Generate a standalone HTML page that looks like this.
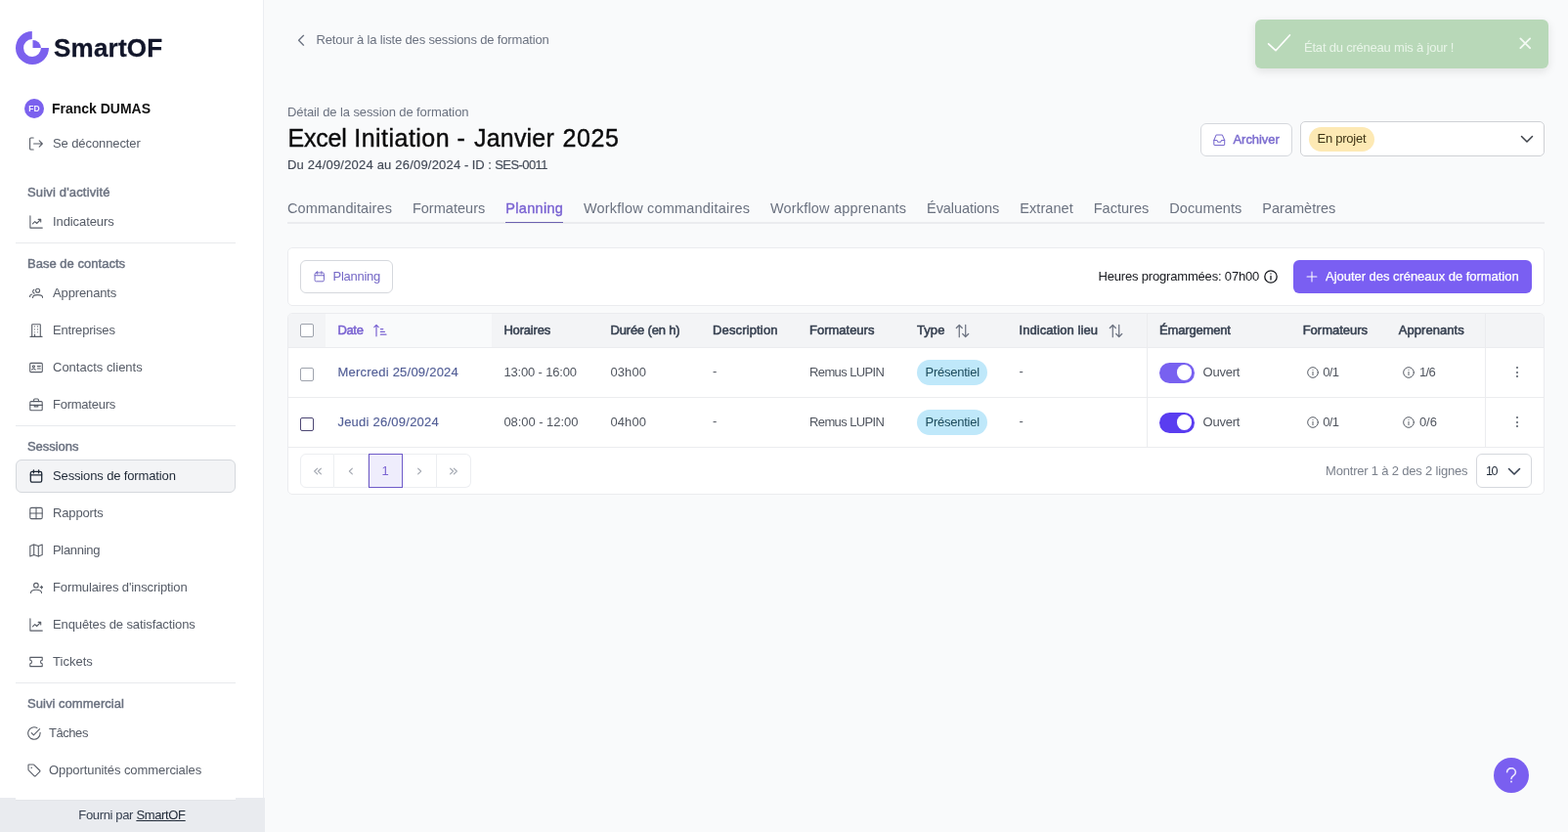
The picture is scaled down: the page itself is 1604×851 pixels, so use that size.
<!DOCTYPE html>
<html lang="fr">
<head>
<meta charset="utf-8">
<title>SmartOF - Excel Initiation - Janvier 2025</title>
<style>
*{box-sizing:border-box;margin:0;padding:0}
html,body{width:1604px;height:851px;overflow:hidden}
body{font-family:"Liberation Sans",sans-serif;font-size:13px;color:#50555f;background:#f9fafb;position:relative;will-change:transform}
a{color:inherit;text-decoration:none}
svg{display:block;flex:none}
span{white-space:nowrap}
/* ---------- sidebar ---------- */
.sidebar{position:absolute;left:0;top:0;width:270px;height:851px;background:#fff;border-right:1px solid #eceef2}
.logo{position:absolute;left:16px;top:32px;height:34px;display:flex;align-items:center}
.logo .logo-text{top:0;font-weight:700;font-size:26px;color:#12162a;-webkit-text-stroke:.3px #12162a;margin-left:5px;line-height:34px}
.user{position:absolute;left:25px;top:101px;height:20px;display:flex;align-items:center}
.avatar{width:20px;height:20px;border-radius:50%;background:#7b61ee;color:#f3f0ff;font-size:8.5px;font-weight:700;display:flex;align-items:center;justify-content:center}
.user .user-name{top:0;margin-left:8px;font-size:14px;font-weight:700;color:#111}
.nav{position:absolute;left:16px;top:130px;width:225px;background:#fff;z-index:1}
.nav a{display:flex;align-items:center;height:34px;margin-bottom:4px;padding-left:13px;border:1px solid transparent;border-radius:6px;color:#555b66}
.nav a svg{margin-right:10px;color:#595e68}
.t{position:relative;top:-1px}
.nav a.tight svg{margin-right:8px;margin-left:-2px}
.nav a.active{background:#f3f4f6;border-color:#d5d8dd;color:#1f2937}
.nav a.active svg{color:#1f2937;stroke-width:1.3}
.nav h3{font-size:13px;font-weight:400;color:#6b7280;-webkit-text-stroke:.45px #6b7280;height:26px;line-height:26px;padding-left:12px;margin-top:8px}
.nav hr{border:0;border-top:1px solid #e8eaed;height:1px;margin:0}
.footer{position:absolute;left:0;top:816px;width:271px;padding-right:1px;height:35px;background:#e9ebef;text-align:center;line-height:35px;color:#374151}
.footer a{text-decoration:underline;color:#1f2937}
/* ---------- main ---------- */
.main{position:absolute;left:270px;top:0;width:1334px;height:851px}
.back{position:absolute;left:32px;top:31px;height:20px;display:flex;align-items:center;color:#6b7280}
.back svg{margin-right:9px}
.kicker{position:absolute;left:24px;top:106px;height:20px;line-height:20px;color:#6b7280}
h1{position:absolute;left:24px;top:126px;height:30px;line-height:30px;font-size:25px;font-weight:400;color:#0b0b0c;-webkit-text-stroke:.4px #0b0b0c}
.sub{position:absolute;left:24px;top:160px;height:20px;line-height:20px;color:#434a57;-webkit-text-stroke:.15px #434a57;white-space:nowrap}
.btn{display:flex;align-items:center;height:34px;border:1px solid #d5d8dd;border-radius:6px;background:#fff;color:#7467c6}
.archive{position:absolute;left:958px;top:126px;width:94px;padding-left:12px;-webkit-text-stroke:.45px #7b6ccf;color:#7b6ccf}
.archive svg{margin-right:8px}
.status{position:absolute;left:1060px;top:124px;width:250px;height:36px;border:1px solid #cfd1d5;border-radius:5px;background:#fff;display:flex;align-items:center;padding-left:8px}
.badge-y{height:25px;border-radius:13px;background:#fde9b4;color:#3f3415;padding:0 8.5px;display:flex;align-items:center}
.status svg{position:absolute;right:10.3px;top:9.5px;color:#3c4048}
.tabs{position:absolute;left:24px;top:198px;width:1286px;height:31px;border-bottom:2px solid #ebecef;display:flex;font-size:14.5px;color:#6b7280}
.tabs a{white-space:nowrap;height:30px;line-height:31px;margin-right:21px;border-bottom:1px solid transparent;position:relative;z-index:1}
.tabs a.on{color:#7a63d2;-webkit-text-stroke:.4px #7a63d2;border-bottom-color:#6d62b0}
.toast{position:absolute;left:1014px;top:20px;width:300px;height:50px;border-radius:6px;background:#b8d8b8;color:#e9f5e9;box-shadow:0 3px 10px rgba(0,0,0,.10)}
.toast .ck{position:absolute;left:12px;top:14px}
.toast .msg{position:absolute;left:50px;top:19px;height:20px;line-height:20px}
.toast .x{position:absolute;left:270px;top:17.7px}
/* toolbar */
.bar{position:absolute;left:24px;top:253px;width:1286px;height:60px;background:#fff;border:1px solid #ebecef;border-radius:5px}
.bar .plan{position:absolute;left:12px;top:12px;width:95px;padding-left:12.5px}
.bar .plan svg{margin-right:8.5px}
.hours{position:absolute;left:828.5px;top:19px;height:20px;display:flex;align-items:center;color:#15171c}
.hours svg{margin-left:5px}
.add{position:absolute;left:1028px;top:12px;width:244px;height:34px;border-radius:6px;background:#7a5ff2;color:#fff;display:flex;align-items:center;padding-left:13px;-webkit-text-stroke:.25px #fff}
.add svg{margin-right:8px}
/* table */
.tbl{position:absolute;left:24px;top:320px;width:1286px;height:186px;background:#fff;border:1px solid #ebecef;border-radius:5px;overflow:hidden}
.tr{position:absolute;left:0;width:1284px;display:flex;border-bottom:1px solid #ebecef}
.tr.h{top:0;height:35px;background:#f3f4f6;color:#374151;font-size:13px;-webkit-text-stroke:.55px #374151}
.tr.r1{top:35px;height:51px}
.tr.r2{top:86px;height:51px}
.td{display:flex;align-items:center;height:100%;flex:none}
.c0{width:38px;padding-left:12px}
.c1{width:170px;padding-left:12.4px}
.c2{width:110px;padding-left:12.4px}
.c3{width:104px;padding-left:11.5px}
.c4{width:99px;padding-left:12px}
.c5{width:110px;padding-left:12px}
.c6{width:104px;padding-left:12px}
.c7{width:143px;padding-left:12.5px}
.c8{width:147px;padding-left:12px;border-left:1px solid #ebecef}
.c9{width:99px;padding-left:12.7px}
.c10{width:100px;padding-left:11.7px}
.c10.cnt svg{margin-right:5.2px}
.c11{width:60px;border-left:1px solid #ebecef;justify-content:center;padding-left:4px}
.tr.h .c1{background:#f9fafb;color:#7a63d2;-webkit-text-stroke-color:#7a63d2}
.tr.h svg{margin-left:10.5px;color:#6b7280}
.tr.h .c1 svg{color:#7a63d2}
.cb{width:14px;height:14px;border:1px solid #9ea3ad;border-radius:2px;background:#fff}
.r1 .cb,.r2 .cb{position:relative;top:2px}
.cb.hv{border-color:#4c4673}
.dash{position:relative;top:-2px}
.date{color:#525e96;-webkit-text-stroke:.15px #525e96}
.badge-b{height:26px;border-radius:13px;background:#bfe8fa;color:#1c4b5c;padding:0 8.5px;display:flex;align-items:center}
.sw{width:36px;height:21px;border-radius:11px;background:#7861f0;position:relative;margin-right:8.5px}
.sw i{position:absolute;right:2.8px;top:2.8px;width:15.4px;height:15.4px;border-radius:50%;background:#fff}
.sw.hv{background:#5a3df0}
.cnt svg{margin-right:4.5px;margin-left:4px}
.kebab{width:3px;height:13px;position:relative}
.kebab i{position:absolute;left:.5px;width:2px;height:2px;border-radius:50%;background:#555b66}
.pager{position:absolute;left:12px;top:143px;height:35px;display:flex}
.pager a{width:35px;height:35px;display:flex;align-items:center;justify-content:center;color:#a3a8b1;border:1px solid #eceef1;border-left-width:0;font-size:13px}
.pager a:first-child{border-left-width:1px;border-radius:6px 0 0 6px}
.pager a:last-child{border-radius:0 6px 6px 0}
.pager a.on{background:#efedfc;color:#7a63d2;outline:1px solid #6f5bc9;outline-offset:-1px}
.showing .t,.per .t{top:0}
.showing{position:absolute;left:1061px;top:151px;height:20px;line-height:20px;color:#7b818c}
.per{position:absolute;left:1215px;top:143px;width:57px;height:35px;border:1px solid #d5d8dd;border-radius:6px;display:flex;align-items:center;padding-left:9px;color:#1f2937;font-size:12.5px}
.per svg{position:absolute;right:10px;top:10px;color:#374151}
.help{position:absolute;left:1258px;top:775px;width:36px;height:36px;border-radius:50%;background:#7a5ff0;color:#ece8fd;display:flex;align-items:center;justify-content:center;padding-bottom:1px}
</style>
</head>
<body>
<aside class="sidebar">
  <div class="logo">
    <svg width="34" height="34" viewBox="0 0 34 34"><path d="M16.8 0A17 17 0 1 0 34 16.9H25.9A8.9 8.9 0 1 1 16.8 8.1Z" fill="#7b61ee"/><path d="M17.5 8.9A8.3 8.3 0 0 1 25.9 17.1H17.5Z" fill="#7b61ee"/></svg>
    <span class="t logo-text" style="letter-spacing:0.233px">SmartOF</span>
  </div>
  <div class="user"><span class="avatar">FD</span><span class="t user-name" style="letter-spacing:-0.012px">Franck DUMAS</span></div>
  <nav class="nav">
    <a href="#"><svg width="14" height="14" viewBox="0 0 14 14" fill="none" stroke="currentColor" stroke-width="1.1" stroke-linecap="round" stroke-linejoin="round"><path d="M4.2 1H1.6a1 1 0 0 0-1 1v10a1 1 0 0 0 1 1h2.6"/><path d="M4.6 7h8.4M10.2 3.9l3.1 3.1-3.1 3.1"/></svg><span class="t" style="letter-spacing:-0.097px">Se déconnecter</span></a>
    <h3 style="margin-top:20px;letter-spacing:0.163px">Suivi d'activité</h3>
    <a href="#"><svg width="14" height="14" viewBox="0 0 14 14" fill="none" stroke="currentColor" stroke-width="1.1" stroke-linecap="round" stroke-linejoin="round"><path d="M0.9 0.8v12.3h12.4"/><path d="M3.4 8.9l2.3-2.3 1.9 1.9 3.9-3.9"/><path d="M9.2 4.4h2.5v2.5"/></svg><span class="t" style="letter-spacing:-0.089px">Indicateurs</span></a>
    <hr>
    <h3 style="letter-spacing:0.025px">Base de contacts</h3>
    <a href="#"><svg width="14" height="14" viewBox="0 0 14 14" fill="none" stroke="currentColor" stroke-width="1.1" stroke-linecap="round" stroke-linejoin="round"><circle cx="8.6" cy="4.3" r="2"/><path d="M3.5 11.4C3.5 9.6 5.6 8.6 8.6 8.6s5.1 1 5.1 2.8"/><path d="M4.9 3.3a2 2 0 0 0 .2 3.8"/><path d="M0.5 10.4c0-1.3 1-2.2 2.4-2.4"/></svg><span class="t" style="letter-spacing:-0.132px">Apprenants</span></a>
    <a href="#"><svg width="14" height="14" viewBox="0 0 14 14" fill="none" stroke="currentColor" stroke-width="1.1" stroke-linecap="round" stroke-linejoin="round"><path d="M2.7 13.4V1.2a.5.5 0 0 1 .5-.5h7.6a.5.5 0 0 1 .5.5V13.4"/><path d="M1 13.4h12"/><path d="M5.4 2.9v.1M8.5 2.9v.1M5.4 5.8v.1M8.5 5.8v.1M5.4 8.7v.1M8.5 8.7v.1M5.5 11v2.4"/></svg><span class="t" style="letter-spacing:-0.185px">Entreprises</span></a>
    <a href="#"><svg width="14" height="14" viewBox="0 0 14 14" fill="none" stroke="currentColor" stroke-width="1.1" stroke-linecap="round" stroke-linejoin="round"><rect x="0.7" y="2.4" width="12.6" height="9.2" rx="1"/><circle cx="4.4" cy="5.8" r="1.1"/><path d="M2.6 9.3a1.9 1.9 0 0 1 3.6 0"/><path d="M8.3 5.6h3M8.3 8h3"/></svg><span class="t" style="letter-spacing:-0.004px">Contacts clients</span></a>
    <a href="#"><svg width="14" height="14" viewBox="0 0 14 14" fill="none" stroke="currentColor" stroke-width="1.1" stroke-linecap="round" stroke-linejoin="round"><rect x="0.8" y="3.6" width="12.4" height="9.2" rx="1"/><path d="M4.6 3.6V2a1 1 0 0 1 1-1h2.8a1 1 0 0 1 1 1v1.6"/><path d="M0.8 7.4h12.4"/><path d="M5.2 7.4v1.5h3.6V7.4"/></svg><span class="t" style="letter-spacing:-0.24px">Formateurs</span></a>
    <hr>
    <h3 style="letter-spacing:-0.05px">Sessions</h3>
    <a href="#" class="active"><svg width="14" height="14" viewBox="0 0 14 14" fill="none" stroke="currentColor" stroke-width="1.1" stroke-linecap="round" stroke-linejoin="round"><rect x="1.3" y="2.4" width="11.4" height="10.8" rx="1.6"/><path d="M4.4 0.8v3M9.6 0.8v3M1.3 5.8h11.4"/></svg><span class="t" style="letter-spacing:-0.136px">Sessions de formation</span></a>
    <a href="#"><svg width="14" height="14" viewBox="0 0 14 14" fill="none" stroke="currentColor" stroke-width="1.1" stroke-linecap="round" stroke-linejoin="round"><rect x="0.8" y="1.4" width="12.4" height="11.2" rx="1.4"/><path d="M0.8 7h12.4M7 1.4v11.2"/></svg><span class="t" style="letter-spacing:-0.15px">Rapports</span></a>
    <a href="#"><svg width="14" height="14" viewBox="0 0 14 14" fill="none" stroke="currentColor" stroke-width="1.1" stroke-linecap="round" stroke-linejoin="round"><path d="M0.8 2.6l3.9-1.6 4.6 1.6 3.9-1.6v10.4l-3.9 1.6-4.6-1.6-3.9 1.6z"/><path d="M4.7 1v10.4M9.3 2.6v10.4"/></svg><span class="t" style="letter-spacing:-0.314px">Planning</span></a>
    <a href="#"><svg width="14" height="14" viewBox="0 0 14 14" fill="none" stroke="currentColor" stroke-width="1.1" stroke-linecap="round" stroke-linejoin="round"><circle cx="6.9" cy="4.7" r="2.3"/><path d="M1.5 12.5C1.5 10.4 3.8 9.3 7 9.3s5.5 1.1 5.5 3.2"/><path d="M12.6 5.2v2.8M11.2 6.6h2.8"/></svg><span class="t" style="letter-spacing:-0.116px">Formulaires d'inscription</span></a>
    <a href="#"><svg width="14" height="14" viewBox="0 0 14 14" fill="none" stroke="currentColor" stroke-width="1.1" stroke-linecap="round" stroke-linejoin="round"><path d="M0.9 0.8v12.3h12.4"/><path d="M3.4 8.9l2.3-2.3 1.9 1.9 3.9-3.9"/><path d="M9.2 4.4h2.5v2.5"/></svg><span class="t" style="letter-spacing:-0.098px">Enquêtes de satisfactions</span></a>
    <a href="#"><svg width="14" height="14" viewBox="0 0 14 14" fill="none" stroke="currentColor" stroke-width="1.1" stroke-linecap="round" stroke-linejoin="round"><path d="M0.8 2.4h12.4v2.9a1.7 1.7 0 0 0 0 3.4v2.9H0.8V8.7a1.7 1.7 0 0 0 0-3.4z"/></svg><span class="t" style="letter-spacing:0.019px">Tickets</span></a>
    <hr>
    <h3 style="letter-spacing:0.044px">Suivi commercial</h3>
    <a href="#" class="tight"><svg width="14" height="14" viewBox="0 0 14 14" fill="none" stroke="currentColor" stroke-width="1.1" stroke-linecap="round" stroke-linejoin="round"><path d="M13.1 6.2v.8a6.2 6.2 0 1 1-3.2-5.4"/><path d="M12.6 2.6L6.4 8.8 4.2 6.6"/></svg><span class="t" style="letter-spacing:-0.446px">Tâches</span></a>
    <a href="#" class="tight"><svg width="14" height="14" viewBox="0 0 14 14" fill="none" stroke="currentColor" stroke-width="1.1" stroke-linecap="round" stroke-linejoin="round"><path d="M1 1.6v4.6a1 1 0 0 0 .3.7l5.7 5.7a1 1 0 0 0 1.4 0l4.2-4.2a1 1 0 0 0 0-1.4L6.9 1.3a1 1 0 0 0-.7-.3H1.6a.6.6 0 0 0-.6.6z"/><path d="M4.2 4.2v.1" stroke-width="1.6"/></svg><span class="t" style="letter-spacing:-0.085px">Opportunités commerciales</span></a>
    <hr style="margin-top:13px;border-top-color:#e3e5e9">
  </nav>
  <div class="footer"><span style="letter-spacing:-0.346px">Fourni par <a href="#">SmartOF</a></span></div>
</aside>
<main class="main">
  <a class="back" href="#"><svg width="12.5" height="12.5" viewBox="0 0 14 14" fill="none" stroke="currentColor" stroke-width="1.5" stroke-linecap="round" stroke-linejoin="round"><path d="M9.5 1.5L4 7l5.5 5.5"/></svg><span class="t" style="letter-spacing:-0.161px">Retour à la liste des sessions de formation</span></a>
  <div class="toast">
    <span class="ck"><svg width="26" height="20" viewBox="0 0 26 20" fill="none" stroke="#fff" stroke-width="1.7" stroke-linecap="round" stroke-linejoin="round"><path d="M1.6 10.9l7.4 6.8L23.4 2"/></svg></span>
    <span class="t msg" style="letter-spacing:-0.21px">État du créneau mis à jour !</span>
    <span class="x"><svg style="color:#f4faf4" width="12.5" height="12.5" viewBox="0 0 14 14" fill="none" stroke="currentColor" stroke-width="2" stroke-linecap="round" stroke-linejoin="round"><path d="M1.5 1.5l11 11M12.5 1.5l-11 11"/></svg></span>
  </div>
  <div class="kicker"><span class="t" style="letter-spacing:-0.097px">Détail de la session de formation</span></div>
  <h1><span style="position:absolute;left:0.5px;letter-spacing:-0.206px">Excel</span> <span style="position:absolute;left:68.3px;letter-spacing:0.464px">Initiation</span> <span style="position:absolute;left:173.5px;letter-spacing:0px">-</span> <span style="position:absolute;left:191.0px;letter-spacing:0.2px">Janvier</span> <span style="position:absolute;left:281.5px;letter-spacing:0.592px">2025</span></h1>
  <div class="sub"><span class="t" style="letter-spacing:0.198px">Du 24/09/2024 au 26/09/2024</span><span class="t" style="letter-spacing:-0.07px;white-space:pre"> - ID : </span><span class="t" style="letter-spacing:-0.585px">SES-0011</span></div>
  <a class="btn archive" href="#"><svg width="12.5" height="12.5" viewBox="0 0 14 14" fill="none" stroke="currentColor" stroke-width="1.2" stroke-linecap="round" stroke-linejoin="round"><path d="M0.9 7.2L3.2 1.8a1 1 0 0 1 .9-.6h5.8a1 1 0 0 1 .9.6l2.3 5.4v4.6a1 1 0 0 1-1 1H1.9a1 1 0 0 1-1-1z"/><path d="M0.9 7.2h3.4l1.2 2h3l1.2-2h3.4"/></svg><span class="t" style="letter-spacing:-0.054px">Archiver</span></a>
  <div class="status"><span class="badge-y"><span class="t" style="letter-spacing:-0.254px">En projet</span></span><svg width="14" height="14" viewBox="0 0 14 14" fill="none" stroke="currentColor" stroke-width="1.5" stroke-linecap="round" stroke-linejoin="round"><path d="M1.5 4.5L7 10l5.5-5.5"/></svg></div>
  <nav class="tabs">
    <a href="#" style="width:106.9px;letter-spacing:0.103px">Commanditaires</a>
    <a href="#" style="width:74.4px;letter-spacing:0.03px">Formateurs</a>
    <a href="#" class=on style="width:58.6px;letter-spacing:0.309px">Planning</a>
    <a href="#" style="width:170.1px;letter-spacing:0.199px">Workflow commanditaires</a>
    <a href="#" style="width:139.1px;letter-spacing:0.176px">Workflow apprenants</a>
    <a href="#" style="width:74.3px;letter-spacing:-0.066px">Évaluations</a>
    <a href="#" style="width:54.3px;letter-spacing:0.043px">Extranet</a>
    <a href="#" style="width:56.6px;letter-spacing:0.028px">Factures</a>
    <a href="#" style="width:74.1px;letter-spacing:0.096px">Documents</a>
    <a href="#" style="width:75px;letter-spacing:0.006px">Paramètres</a>
  </nav>
  <section class="bar">
    <a class="btn plan" href="#"><svg width="11.5" height="11.5" viewBox="0 0 14 14" fill="none" stroke="currentColor" stroke-width="1.2" stroke-linecap="round" stroke-linejoin="round"><rect x="1.3" y="2.4" width="11.4" height="10.8" rx="1.6"/><path d="M4.4 0.8v3M9.6 0.8v3M1.3 5.8h11.4"/></svg><span class="t" style="letter-spacing:-0.257px">Planning</span></a>
    <div class="hours"><span class="t" style="letter-spacing:-0.179px">Heures programmées: 07h00</span><svg width="14" height="14" viewBox="0 0 14 14" fill="none" stroke="currentColor" stroke-width="1.3" stroke-linecap="round" stroke-linejoin="round"><circle cx="7" cy="7" r="6.2"/><path d="M7 6.3v3.8M7 3.9v.1"/></svg></div>
    <a class="add" href="#"><svg width="12" height="12" viewBox="0 0 14 14" fill="none" stroke="currentColor" stroke-width="1.2" stroke-linecap="round" stroke-linejoin="round"><path d="M7 1.2v11.6M1.2 7h11.6"/></svg><span class="t" style="letter-spacing:-0.035px">Ajouter des créneaux de formation</span></a>
  </section>
  <section class="tbl">
    <div class="tr h">
      <div class="td c0"><span class="cb"></span></div>
      <div class="td c1"><span class="t" style="letter-spacing:-0.32px">Date</span><svg width="14" height="14" viewBox="0 0 14 14" fill="none" stroke="currentColor" stroke-width="1.2" stroke-linecap="round" stroke-linejoin="round"><path d="M3 12.8V1.4M0.8 3.6L3 1.4l2.2 2.2"/><path d="M7.4 5.6h2.4M7.4 8.4h4M7.4 11.2h5.6"/></svg></div>
      <div class="td c2"><span class="t" style="letter-spacing:-0.175px">Horaires</span></div>
      <div class="td c3"><span class="t" style="letter-spacing:-0.171px">Durée (en h)</span></div>
      <div class="td c4"><span class="t" style="letter-spacing:0.147px">Description</span></div>
      <div class="td c5"><span class="t" style="letter-spacing:-0.007px">Formateurs</span></div>
      <div class="td c6"><span class="t" style="letter-spacing:0.072px">Type</span><svg width="15" height="15" viewBox="0 0 14 14" fill="none" stroke="currentColor" stroke-width="1.15" stroke-linecap="round" stroke-linejoin="round"><path d="M4 12.8V1.4M1.2 4.2L4 1.4l2.8 2.8"/><path d="M10 1.2v11.4M7.2 9.8l2.8 2.8 2.8-2.8"/></svg></div>
      <div class="td c7"><span class="t" style="letter-spacing:0.072px">Indication lieu</span><svg width="15" height="15" viewBox="0 0 14 14" fill="none" stroke="currentColor" stroke-width="1.15" stroke-linecap="round" stroke-linejoin="round"><path d="M4 12.8V1.4M1.2 4.2L4 1.4l2.8 2.8"/><path d="M10 1.2v11.4M7.2 9.8l2.8 2.8 2.8-2.8"/></svg></div>
      <div class="td c8"><span class="t" style="letter-spacing:-0.169px">Émargement</span></div>
      <div class="td c9"><span class="t" style="letter-spacing:-0.007px">Formateurs</span></div>
      <div class="td c10"><span class="t" style="letter-spacing:0.068px">Apprenants</span></div>
      <div class="td c11"></div>
    </div>
    <div class="tr r1">
      <div class="td c0"><span class="cb"></span></div>
      <div class="td c1"><span class="t date" style="letter-spacing:0.231px">Mercredi 25/09/2024</span></div>
      <div class="td c2"><span class="t" style="letter-spacing:-0.168px">13:00 - 16:00</span></div>
      <div class="td c3"><span class="t" style="letter-spacing:0.062px">03h00</span></div>
      <div class="td c4"><span class="dash">-</span></div>
      <div class="td c5"><span class="t" style="letter-spacing:-0.608px">Remus LUPIN</span></div>
      <div class="td c6"><span class="badge-b"><span class="t" style="letter-spacing:-0.245px">Présentiel</span></span></div>
      <div class="td c7"><span class="dash">-</span></div>
      <div class="td c8"><span class="sw"><i></i></span><span class="t" style="letter-spacing:-0.223px">Ouvert</span></div>
      <div class="td c9 cnt"><svg width="12" height="12" viewBox="0 0 14 14" fill="none" stroke="currentColor" stroke-width="1.1" stroke-linecap="round" stroke-linejoin="round"><circle cx="7" cy="7" r="6.2"/><path d="M7 6.3v3.8M7 3.9v.1"/></svg><span class="t" style="letter-spacing:-0.636px">0/1</span></div>
      <div class="td c10 cnt"><svg width="12" height="12" viewBox="0 0 14 14" fill="none" stroke="currentColor" stroke-width="1.1" stroke-linecap="round" stroke-linejoin="round"><circle cx="7" cy="7" r="6.2"/><path d="M7 6.3v3.8M7 3.9v.1"/></svg><span class="t" style="letter-spacing:-0.636px">1/6</span></div>
      <div class="td c11"><span class="kebab"><i style="top:.5px"></i><i style="top:5.2px"></i><i style="top:9.9px"></i></span></div>
    </div>
    <div class="tr r2">
      <div class="td c0"><span class="cb hv"></span></div>
      <div class="td c1"><span class="t date" style="letter-spacing:0.243px">Jeudi 26/09/2024</span></div>
      <div class="td c2"><span class="t" style="letter-spacing:-0.051px">08:00 - 12:00</span></div>
      <div class="td c3"><span class="t" style="letter-spacing:0.062px">04h00</span></div>
      <div class="td c4"><span class="dash">-</span></div>
      <div class="td c5"><span class="t" style="letter-spacing:-0.608px">Remus LUPIN</span></div>
      <div class="td c6"><span class="badge-b"><span class="t" style="letter-spacing:-0.245px">Présentiel</span></span></div>
      <div class="td c7"><span class="dash">-</span></div>
      <div class="td c8"><span class="sw hv"><i></i></span><span class="t" style="letter-spacing:-0.223px">Ouvert</span></div>
      <div class="td c9 cnt"><svg width="12" height="12" viewBox="0 0 14 14" fill="none" stroke="currentColor" stroke-width="1.1" stroke-linecap="round" stroke-linejoin="round"><circle cx="7" cy="7" r="6.2"/><path d="M7 6.3v3.8M7 3.9v.1"/></svg><span class="t" style="letter-spacing:-0.636px">0/1</span></div>
      <div class="td c10 cnt"><svg width="12" height="12" viewBox="0 0 14 14" fill="none" stroke="currentColor" stroke-width="1.1" stroke-linecap="round" stroke-linejoin="round"><circle cx="7" cy="7" r="6.2"/><path d="M7 6.3v3.8M7 3.9v.1"/></svg><span class="t" style="letter-spacing:0.014px">0/6</span></div>
      <div class="td c11"><span class="kebab"><i style="top:.5px"></i><i style="top:5.2px"></i><i style="top:9.9px"></i></span></div>
    </div>
    <div class="pager">
      <a href="#" title="Première page"><svg width="12" height="12" viewBox="0 0 14 14" fill="none" stroke="currentColor" stroke-width="1.3" stroke-linecap="round" stroke-linejoin="round"><path d="M6.6 3.6L3.1 7l3.5 3.4M11 3.6L7.5 7l3.5 3.4"/></svg></a><a href="#" title="Page précédente"><svg width="12" height="12" viewBox="0 0 14 14" fill="none" stroke="currentColor" stroke-width="1.3" stroke-linecap="round" stroke-linejoin="round"><path d="M8.6 3.6L5.1 7l3.5 3.4"/></svg></a><a href="#" class="on"><span>1</span></a><a href="#" title="Page suivante"><svg width="12" height="12" viewBox="0 0 14 14" fill="none" stroke="currentColor" stroke-width="1.3" stroke-linecap="round" stroke-linejoin="round"><path d="M5.4 3.6L8.9 7 5.4 10.4"/></svg></a><a href="#" title="Dernière page"><svg width="12" height="12" viewBox="0 0 14 14" fill="none" stroke="currentColor" stroke-width="1.3" stroke-linecap="round" stroke-linejoin="round"><path d="M3 3.6L6.5 7 3 10.4M7.4 3.6L10.9 7l-3.5 3.4"/></svg></a>
    </div>
    <div class="showing"><span class="t" style="letter-spacing:-0.192px">Montrer 1 à 2 des 2 lignes</span></div>
    <div class="per"><span class="t" style="letter-spacing:-1.504px">10</span><svg width="14" height="14" viewBox="0 0 14 14" fill="none" stroke="currentColor" stroke-width="1.6" stroke-linecap="round" stroke-linejoin="round"><path d="M1.5 4.5L7 10l5.5-5.5"/></svg></div>
  </section>
  <a class="help" href="#" title="Aide"><svg width="12" height="16" viewBox="0 0 12 16" fill="none" stroke="currentColor" stroke-width="1.6" stroke-linecap="round" stroke-linejoin="round"><path d="M1.6 4.7a4.4 4.1 0 1 1 6.9 3.4C7 9.2 6 9.9 6 11.4"/><path d="M6 14.4v.1" stroke-width="2"/></svg></a>
</main>
</body>
</html>
